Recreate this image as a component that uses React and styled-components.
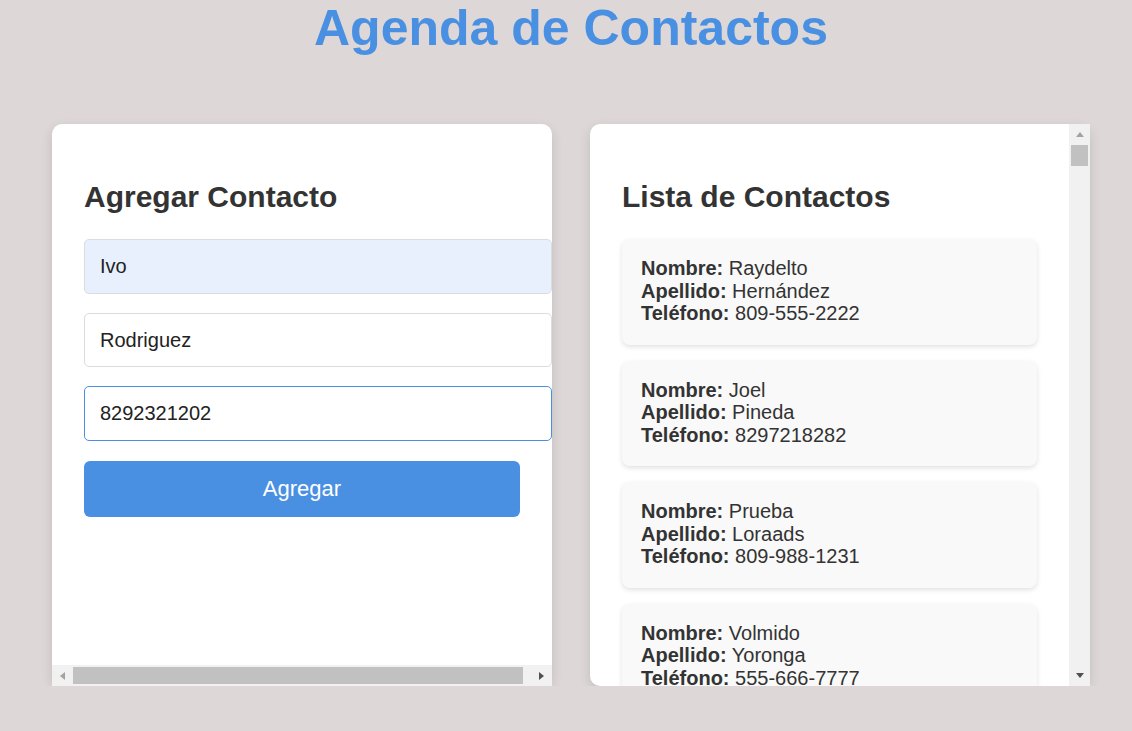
import React from "react";
import styled, { createGlobalStyle } from "styled-components";

const contactos = [
  { nombre: "Raydelto", apellido: "Hernández", telefono: "809-555-2222" },
  { nombre: "Joel", apellido: "Pineda", telefono: "8297218282" },
  { nombre: "Prueba", apellido: "Loraads", telefono: "809-988-1231" },
  { nombre: "Volmido", apellido: "Yoronga", telefono: "555-666-7777" },
];

export default function App() {
  return (
    <>
      <GlobalStyle />
      <Page>
        <Title>Agenda de Contactos</Title>
        <Columns>
          <Card $direction="column">
            <Viewport>
              <CardTitle>Agregar Contacto</CardTitle>
              <Form onSubmit={(e) => e.preventDefault()}>
                <Input type="text" placeholder="Nombre" defaultValue="Ivo" $autofill />
                <Input type="text" placeholder="Apellido" defaultValue="Rodriguez" />
                <Input type="text" placeholder="Teléfono" defaultValue="8292321202" $focused />
                <SubmitButton type="submit">Agregar</SubmitButton>
              </Form>
            </Viewport>
            <Scrollbar $axis="x">
              <ArrowBox>
                <Arrow $dir="left" />
              </ArrowBox>
              <Track $axis="x">
                <Thumb $axis="x" />
              </Track>
              <ArrowBox>
                <Arrow $dir="right" $active />
              </ArrowBox>
            </Scrollbar>
          </Card>

          <Card $direction="row">
            <Viewport>
              <CardTitle>Lista de Contactos</CardTitle>
              <ContactList>
                {contactos.map((c, i) => (
                  <ContactItem key={i}>
                    <Line>
                      <Label>Nombre:</Label> {c.nombre}
                    </Line>
                    <Line>
                      <Label>Apellido:</Label> {c.apellido}
                    </Line>
                    <Line>
                      <Label>Teléfono:</Label> {c.telefono}
                    </Line>
                  </ContactItem>
                ))}
              </ContactList>
            </Viewport>
            <Scrollbar $axis="y">
              <ArrowBox>
                <Arrow $dir="up" />
              </ArrowBox>
              <Track $axis="y">
                <Thumb $axis="y" />
              </Track>
              <ArrowBox>
                <Arrow $dir="down" $active />
              </ArrowBox>
            </Scrollbar>
          </Card>
        </Columns>
      </Page>
    </>
  );
}

const GlobalStyle = createGlobalStyle`
  * {
    box-sizing: border-box;
  }

  body {
    margin: 0;
    background-color: #ddd7d7;
    font-family: "Liberation Sans", Arial, sans-serif;
    color: #333;
  }
`;

const Page = styled.div`
  padding-left: 10px;
`;

const Title = styled.h1`
  margin: 0;
  text-align: center;
  font-size: 50px;
  line-height: 57px;
  font-weight: bold;
  color: #4a90e2;
`;

const Columns = styled.main`
  display: flex;
  justify-content: center;
  gap: 38px;
  margin-top: 67px;
`;

const Card = styled.section`
  display: flex;
  flex-direction: ${(props) => props.$direction};
  width: 500px;
  height: 562px;
  background-color: #fff;
  border-radius: 10px;
  box-shadow: 0 4px 12px rgba(0, 0, 0, 0.12);
`;

const Viewport = styled.div`
  flex: 1;
  min-width: 0;
  min-height: 0;
  padding: 32px 32px 0;
  overflow: hidden;
`;

const CardTitle = styled.h2`
  margin: 24px 0 25px;
  font-size: 30px;
  line-height: 34px;
  font-weight: bold;
  color: #333;
  white-space: nowrap;
`;

const Form = styled.form`
  display: flex;
  flex-direction: column;
  align-items: flex-start;
`;

const Input = styled.input`
  display: block;
  box-sizing: content-box;
  width: 100%;
  margin: 0 0 19px;
  padding: 15px;
  font-family: inherit;
  font-size: 20px;
  line-height: 22.5px;
  color: #222;
  background-color: ${(props) => (props.$autofill ? "#e8f0fe" : "#fff")};
  border: 1px solid ${(props) => (props.$focused ? "#4a90e2" : "#dcdcdc")};
  border-radius: 5px;
  outline: none;
`;

const SubmitButton = styled.button`
  width: 100%;
  margin-top: 1px;
  padding: 15px;
  font-family: inherit;
  font-size: 22px;
  line-height: 26px;
  color: #fff;
  background-color: #4a90e2;
  border: none;
  border-radius: 6px;
  cursor: pointer;
`;

const ContactList = styled.ul`
  display: flex;
  flex-direction: column;
  gap: 16px;
  margin: 1px 0 0;
  padding: 0;
  list-style: none;
`;

const ContactItem = styled.li`
  padding: 18px 19px 20px;
  background-color: #f9f9f9;
  border-radius: 8px;
  box-shadow: 0 2px 5px rgba(0, 0, 0, 0.12);
  font-size: 20px;
  line-height: 22.5px;
  color: #333;
  white-space: nowrap;
`;

const Line = styled.div``;

const Label = styled.strong`
  font-weight: bold;
`;

/* fake Windows-style scrollbars (the headless browser hides real ones) */
const Scrollbar = styled.div`
  display: flex;
  flex-direction: ${(props) => (props.$axis === "x" ? "row" : "column")};
  flex: 0 0 21px;
  background-color: #f1f1f1;
`;

const ArrowBox = styled.div`
  display: flex;
  align-items: center;
  justify-content: center;
  flex: 0 0 21px;
  width: 21px;
  height: 21px;
`;

const arrowBorders = {
  up: (c) => `border-left: 4.5px solid transparent; border-right: 4.5px solid transparent; border-bottom: 5px solid ${c};`,
  down: (c) => `border-left: 4.5px solid transparent; border-right: 4.5px solid transparent; border-top: 5px solid ${c};`,
  left: (c) => `border-top: 4.5px solid transparent; border-bottom: 4.5px solid transparent; border-right: 5px solid ${c};`,
  right: (c) => `border-top: 4.5px solid transparent; border-bottom: 4.5px solid transparent; border-left: 5px solid ${c};`,
};

const Arrow = styled.span`
  width: 0;
  height: 0;
  ${(props) => arrowBorders[props.$dir](props.$active ? "#505050" : "#a3a3a3")}
`;

const Track = styled.div`
  flex: 1;
  display: flex;
  flex-direction: ${(props) => (props.$axis === "x" ? "row" : "column")};
  padding: ${(props) => (props.$axis === "x" ? "2px 0" : "0 2px")};
`;

const Thumb = styled.div`
  background-color: #c1c1c1;
  ${(props) => (props.$axis === "x" ? "width: 450px;" : "height: 21px;")}
`;
